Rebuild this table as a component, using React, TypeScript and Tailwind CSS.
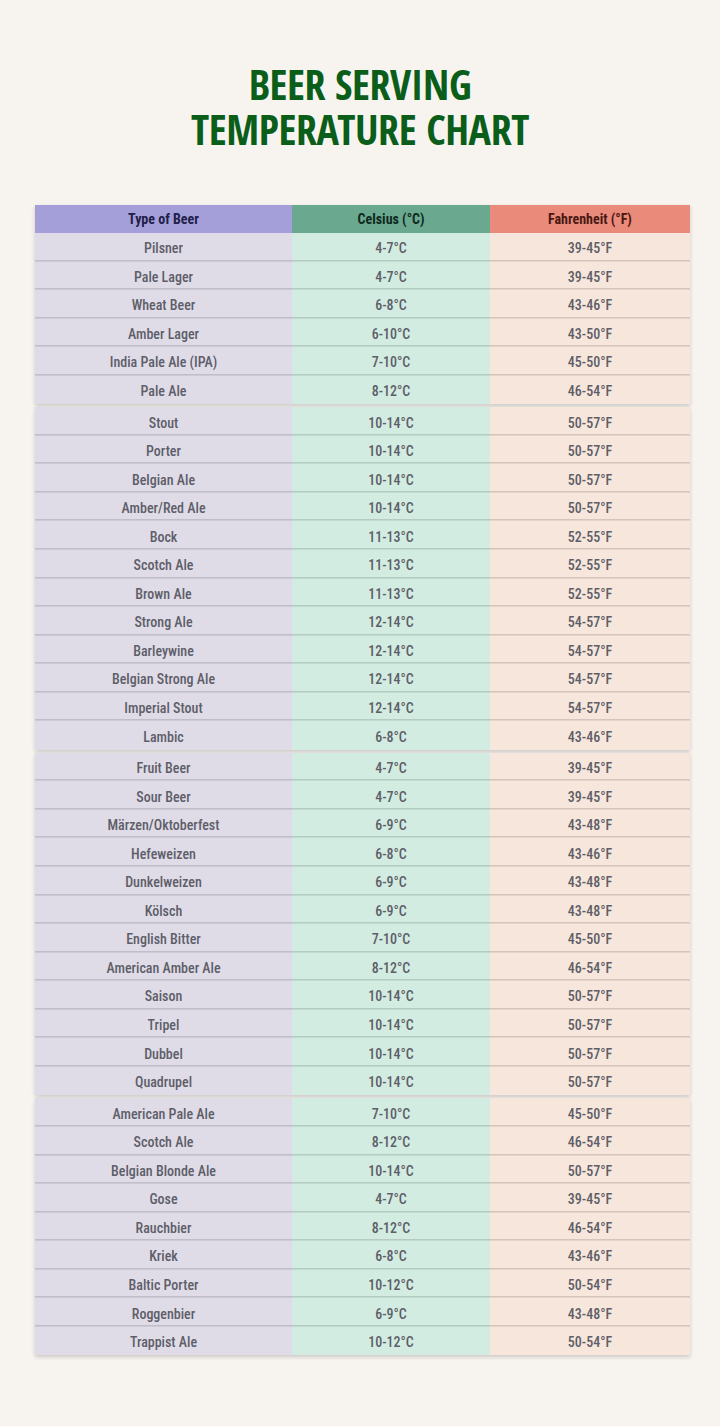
const groups: [string, string, string][][] = [
  [
    ["Pilsner", "4-7°C", "39-45°F"],
    ["Pale Lager", "4-7°C", "39-45°F"],
    ["Wheat Beer", "6-8°C", "43-46°F"],
    ["Amber Lager", "6-10°C", "43-50°F"],
    ["India Pale Ale (IPA)", "7-10°C", "45-50°F"],
    ["Pale Ale", "8-12°C", "46-54°F"],
  ],
  [
    ["Stout", "10-14°C", "50-57°F"],
    ["Porter", "10-14°C", "50-57°F"],
    ["Belgian Ale", "10-14°C", "50-57°F"],
    ["Amber/Red Ale", "10-14°C", "50-57°F"],
    ["Bock", "11-13°C", "52-55°F"],
    ["Scotch Ale", "11-13°C", "52-55°F"],
    ["Brown Ale", "11-13°C", "52-55°F"],
    ["Strong Ale", "12-14°C", "54-57°F"],
    ["Barleywine", "12-14°C", "54-57°F"],
    ["Belgian Strong Ale", "12-14°C", "54-57°F"],
    ["Imperial Stout", "12-14°C", "54-57°F"],
    ["Lambic", "6-8°C", "43-46°F"],
  ],
  [
    ["Fruit Beer", "4-7°C", "39-45°F"],
    ["Sour Beer", "4-7°C", "39-45°F"],
    ["Märzen/Oktoberfest", "6-9°C", "43-48°F"],
    ["Hefeweizen", "6-8°C", "43-46°F"],
    ["Dunkelweizen", "6-9°C", "43-48°F"],
    ["Kölsch", "6-9°C", "43-48°F"],
    ["English Bitter", "7-10°C", "45-50°F"],
    ["American Amber Ale", "8-12°C", "46-54°F"],
    ["Saison", "10-14°C", "50-57°F"],
    ["Tripel", "10-14°C", "50-57°F"],
    ["Dubbel", "10-14°C", "50-57°F"],
    ["Quadrupel", "10-14°C", "50-57°F"],
  ],
  [
    ["American Pale Ale", "7-10°C", "45-50°F"],
    ["Scotch Ale", "8-12°C", "46-54°F"],
    ["Belgian Blonde Ale", "10-14°C", "50-57°F"],
    ["Gose", "4-7°C", "39-45°F"],
    ["Rauchbier", "8-12°C", "46-54°F"],
    ["Kriek", "6-8°C", "43-46°F"],
    ["Baltic Porter", "10-12°C", "50-54°F"],
    ["Roggenbier", "6-9°C", "43-48°F"],
    ["Trappist Ale", "10-12°C", "50-54°F"],
  ],
];

function Row({ r, last }: { r: [string, string, string]; last: boolean }) {
  return (
    <div className="relative grid grid-cols-[257px_198px_200px] h-[28.55px] text-[14px] font-medium text-[#5e5e68] leading-none">
      <div className="flex items-center justify-center pt-[2px] bg-[#dfdce8]">{r[0]}</div>
      <div className="flex items-center justify-center pt-[2px] bg-[#d2ece1]">{r[1]}</div>
      <div className="flex items-center justify-center pt-[2px] bg-[#f6e6db]">{r[2]}</div>
      {!last && (
        <div className="absolute left-0 right-0 bottom-0 h-[2px] bg-[linear-gradient(to_bottom,rgba(0,0,0,0.17),rgba(0,0,0,0.05))]" />
      )}
    </div>
  );
}

export default function App() {
  return (
    <div className="min-h-[1426px] w-[720px] bg-[#f7f4f0] font-['Roboto_Condensed','Roboto',sans-serif] [font-stretch:condensed] pt-[61px]">
      <h1 className="text-center font-['Open_Sans_Condensed','Open_Sans',sans-serif] font-bold text-[42px] leading-[45px] text-[#0b5d1a] tracking-[-0.4px]">
        BEER SERVING
        <br />
        TEMPERATURE CHART
      </h1>
      <div className="ml-[35px] w-[655px] mt-[54px] flex flex-col gap-[3px]">
        {groups.map((g, gi) => (
          <div key={gi} className="flex flex-col shadow-[0_2px_4px_rgba(0,0,0,0.18)]">
            {gi === 0 && (
              <div className="grid grid-cols-[257px_198px_200px] h-[28px] text-[14px] font-bold leading-none">
                <div className="flex items-center justify-center bg-[#a49fd9] text-[#20204a]">Type of Beer</div>
                <div className="flex items-center justify-center bg-[#6aa98f] text-[#0f2a1e]">Celsius (°C)</div>
                <div className="flex items-center justify-center bg-[#e98a7a] text-[#4a1812]">Fahrenheit (°F)</div>
              </div>
            )}
            {g.map((r, i) => (
              <Row key={i} r={r} last={i === g.length - 1} />
            ))}
          </div>
        ))}
      </div>
    </div>
  );
}
